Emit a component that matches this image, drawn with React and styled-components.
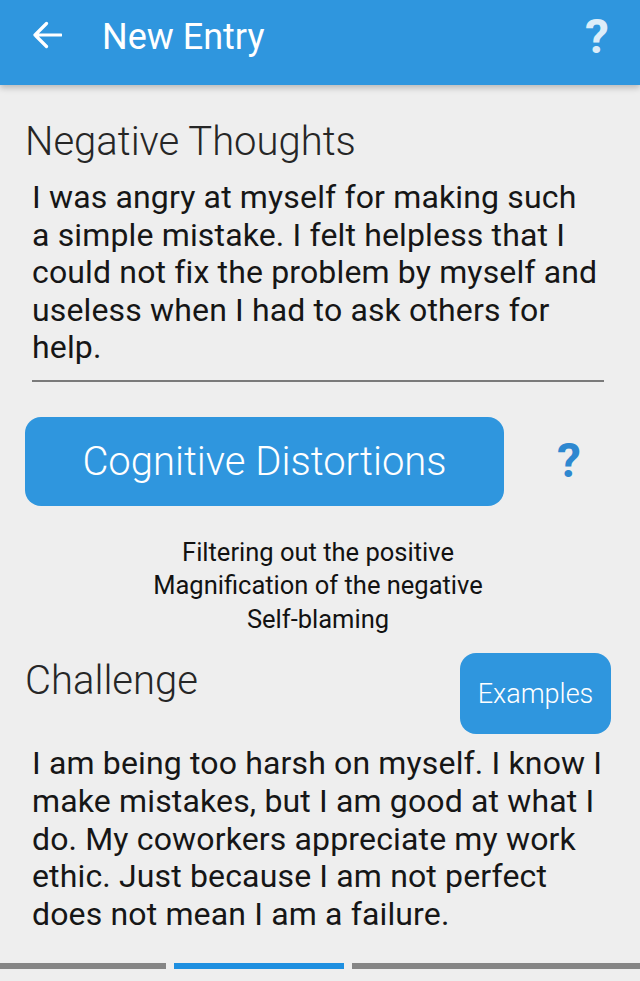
import React from "react";
import styled, { createGlobalStyle } from "styled-components";

const GlobalStyle = createGlobalStyle`
  html, body {
    margin: 0;
    padding: 0;
    background: #eeeeee;
    font-family: Roboto, "Noto Sans", "Liberation Sans", sans-serif;
  }
  * { box-sizing: border-box; }
`;

const negativeLines = [
  "I was angry at myself for making such",
  "a simple mistake. I felt helpless that I",
  "could not fix the problem by myself and",
  "useless when I had to ask others for",
  "help.",
];

const challengeLines = [
  "I am being too harsh on myself. I know I",
  "make mistakes, but I am good at what I",
  "do. My coworkers appreciate my work",
  "ethic. Just because I am not perfect",
  "does not mean I am a failure.",
];

const distortions = [
  "Filtering out the positive",
  "Magnification of the negative",
  "Self-blaming",
];

const BackArrow = () => (
  <svg width="30" height="28" viewBox="0 0 30 28" fill="none">
    <path
      d="M29 14H3M14.5 2.5L3 14l11.5 11.5"
      stroke="#ffffff"
      strokeWidth="3.2"
      strokeLinecap="round"
      strokeLinejoin="round"
    />
  </svg>
);

const Lines = ({ lines }) =>
  lines.map((line, i) => (
    <React.Fragment key={i}>
      {line}
      {i < lines.length - 1 && <br />}
    </React.Fragment>
  ));

const App = () => {
  return (
    <Page>
      <GlobalStyle />
      <Header>
        <BackButton>
          <BackArrow />
        </BackButton>
        <Title>New Entry</Title>
        <HeaderHelp>?</HeaderHelp>
      </Header>

      <Content>
        <SectionTitle>Negative Thoughts</SectionTitle>
        <EntryText>
          <Lines lines={negativeLines} />
        </EntryText>
        <Divider />

        <DistortionRow>
          <BigButton>Cognitive Distortions</BigButton>
          <InlineHelp>?</InlineHelp>
        </DistortionRow>

        <DistortionList>
          {distortions.map((d) => (
            <li key={d}>{d}</li>
          ))}
        </DistortionList>

        <ChallengeRow>
          <SectionTitle $offset>Challenge</SectionTitle>
          <SmallButton>Examples</SmallButton>
        </ChallengeRow>
        <EntryText $gap="11px" $lh="37.75px">
          <Lines lines={challengeLines} />
        </EntryText>
      </Content>

      <Indicator>
        <Segment />
        <Segment $active />
        <Segment />
      </Indicator>
    </Page>
  );
};

export default App;

const Page = styled.div`
  width: 640px;
  height: 981px;
  display: flex;
  flex-direction: column;
  background: #eeeeee;
  overflow: hidden;
`;

const Header = styled.header`
  height: 85px;
  flex-shrink: 0;
  background: #2f96de;
  box-shadow: 0 3px 6px rgba(0, 0, 0, 0.22);
  display: flex;
  align-items: flex-start;
  padding: 0 31px 0 32px;
  position: relative;
  z-index: 1;
`;

const BackButton = styled.div`
  margin-top: 21px;
  width: 30px;
  height: 28px;
  display: flex;
`;

const Title = styled.h1`
  margin: 16px 0 0 40px;
  font-size: 36px;
  line-height: 42px;
  font-weight: 400;
  color: #ffffff;
  flex: 1;
`;

const HeaderHelp = styled.span`
  margin-top: 9px;
  font-size: 48px;
  line-height: 56px;
  font-weight: 700;
  color: #dcedf9;
`;

const Content = styled.main`
  padding: 34px 29px 0 25px;
`;

const SectionTitle = styled.h2`
  margin: ${(p) => (p.$offset ? "5px 0 0 0" : "0")};
  font-size: 40px;
  line-height: 46px;
  font-weight: 300;
  color: #262626;
`;

const EntryText = styled.p`
  margin: ${(p) => p.$gap || "14px"} 0 0 7px;
  font-size: 32px;
  line-height: ${(p) => p.$lh || "37.5px"};
  letter-spacing: 0.15px;
  color: #161616;
  white-space: nowrap;
`;

const Divider = styled.hr`
  border: none;
  height: 2px;
  width: 572px;
  background: #7a7a7a;
  margin: 13px 0 0 7px;
`;

const DistortionRow = styled.div`
  display: flex;
  align-items: center;
  margin-top: 35px;
`;

const BigButton = styled.button`
  width: 479px;
  height: 89px;
  border: none;
  border-radius: 16px;
  background: #2f96de;
  color: #ffffff;
  font-family: inherit;
  font-size: 40px;
  font-weight: 300;
  padding: 0;
`;

const InlineHelp = styled.span`
  margin-left: 53px;
  font-size: 48px;
  line-height: 56px;
  font-weight: 700;
  color: #2e88d0;
`;

const DistortionList = styled.ul`
  list-style: none;
  margin: 30px 0 0 0;
  padding: 0;
  text-align: center;
  font-size: 25.5px;
  line-height: 33.5px;
  color: #121212;
`;

const ChallengeRow = styled.div`
  display: flex;
  justify-content: space-between;
  align-items: flex-start;
  margin-top: 17px;
`;

const SmallButton = styled.button`
  width: 151px;
  height: 81px;
  border: none;
  border-radius: 16px;
  background: #2f96de;
  color: #ffffff;
  font-family: inherit;
  font-size: 27px;
  font-weight: 300;
  padding: 0;
`;

const Indicator = styled.div`
  margin-top: auto;
  margin-bottom: 12px;
  display: grid;
  grid-template-columns: 166px 170px 1fr;
  gap: 8px;
`;

const Segment = styled.div`
  height: 6px;
  background: ${(p) => (p.$active ? "#1e8fe0" : "#858585")};
`;
